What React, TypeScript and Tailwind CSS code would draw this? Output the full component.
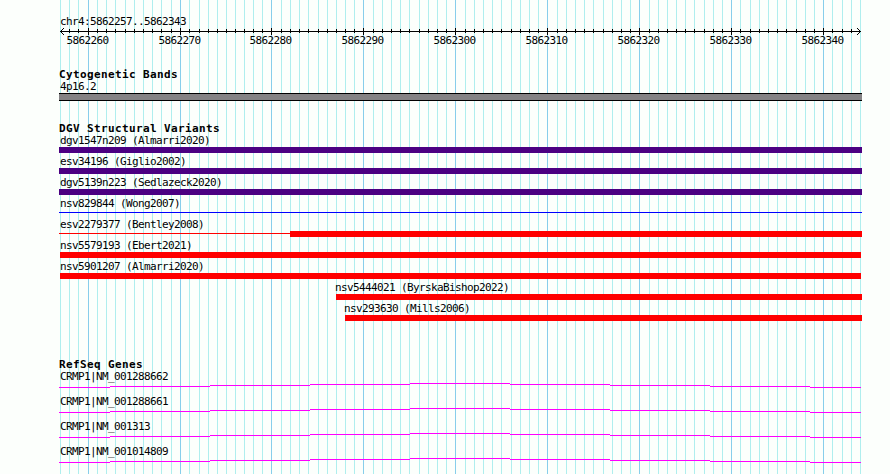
import clsx from 'clsx';

/**
 * Genome browser view
 *
 * Ruler on top, then one block per track. The base-pair grid is drawn once
 * behind all tracks.
 */

interface Variant {
  label: string;
  labelClass?: string;
  barClass: string;
  thinClass?: string;
}

// x position of every base in the visible range
const gridLines = [
  60, 69, 78, 88, 97, 106, 115, 125, 134, 143, 152, 161, 171, 180, 189, 199,
  208, 217, 226, 235, 244, 253, 262, 271, 281, 290, 299, 308, 318, 327, 336,
  345, 354, 363, 373, 382, 391, 400, 409, 419, 428, 437, 446, 455, 465, 474,
  483, 492, 501, 511, 520, 529, 538, 547, 557, 566, 575, 584, 593, 603, 612,
  621, 630, 639, 649, 658, 667, 676, 685, 694, 704, 713, 722, 731, 740, 750,
  759, 768, 777, 786, 796, 805, 814, 823, 832, 842, 851, 860,
];

const isMajor = (index: number) => index % 10 === 3;

const variants: Variant[] = [
  { label: 'dgv1547n209 (Almarri2020)', barClass: 'ml-[59px] w-[803px] bg-[#4b0082]' },
  { label: 'esv34196 (Giglio2002)', barClass: 'ml-[59px] w-[803px] bg-[#4b0082]' },
  { label: 'dgv5139n223 (Sedlazeck2020)', barClass: 'ml-[59px] w-[803px] bg-[#4b0082]' },
  { label: 'nsv829844 (Wong2007)', barClass: 'hidden', thinClass: 'ml-[59px] w-[803px] bg-[#0000ff]' },
  {
    label: 'esv2279377 (Bentley2008)',
    barClass: 'w-[572px] bg-[#ff0000]',
    thinClass: 'ml-[59px] w-[231px] bg-[#ff0000]',
  },
  { label: 'nsv5579193 (Ebert2021)', barClass: 'ml-[60px] w-[801px] bg-[#ff0000]' },
  { label: 'nsv5901207 (Almarri2020)', barClass: 'ml-[60px] w-[801px] bg-[#ff0000]' },
  {
    label: 'nsv5444021 (ByrskaBishop2022)',
    labelClass: 'pl-[335px]',
    barClass: 'ml-[336px] w-[526px] bg-[#ff0000]',
  },
  {
    label: 'nsv293630 (Mills2006)',
    labelClass: 'pl-[344px]',
    barClass: 'ml-[345px] w-[517px] bg-[#ff0000]',
  },
];

const genes = [
  'CRMP1|NM_001288662',
  'CRMP1|NM_001288661',
  'CRMP1|NM_001313',
  'CRMP1|NM_001014809',
];

// Intron line, one pixel step per segment: [x, y, width]
const intronSteps = [
  [59, 4, 51],
  [110, 3, 100],
  [210, 2, 100],
  [310, 1, 100],
  [410, 0, 100],
  [510, 1, 100],
  [610, 2, 100],
  [710, 3, 100],
  [810, 4, 51],
];

function Grid() {
  return (
    <svg className="absolute inset-0" width="890" height="474" shapeRendering="crispEdges">
      {gridLines.map((x, i) => (
        <rect key={x} x={x} y="0" width="1" height="474" fill={isMajor(i) ? '#87ceeb' : '#afeeee'} />
      ))}
    </svg>
  );
}

function Ruler() {
  return (
    <svg className="block" width="890" height="20">
      <g shapeRendering="crispEdges">
        <rect x="60" y="4" width="801" height="1" />
        {gridLines.slice(1, -1).map((x, i) =>
          isMajor(i + 1) ? (
            <rect key={x} x={x} y="1" width="1" height="7" />
          ) : (
            <rect key={x} x={x} y="2" width="1" height="4" />
          )
        )}
        {[1, 2, 3].map((d) => (
          <g key={d}>
            <rect x={60 + d} y={4 - d} width="1" height="1" />
            <rect x={60 + d} y={4 + d} width="1" height="1" />
            <rect x={860 - d} y={4 - d} width="1" height="1" />
            <rect x={860 - d} y={4 + d} width="1" height="1" />
          </g>
        ))}
      </g>
      {gridLines.map((x, i) =>
        isMajor(i) ? (
          <text key={x} x={x - 21.5} y="17">
            {5862257 + i}
          </text>
        ) : null
      )}
    </svg>
  );
}

function TrackTitle({ children }: { children: string }) {
  return (
    <h2 className="h-3 pl-[59px] font-bold tracking-[0.38px]">{children}</h2>
  );
}

function VariantRow({ label, labelClass, barClass, thinClass }: Variant) {
  return (
    <div className="h-[21px]">
      <div className={clsx('h-[13px]', labelClass ?? 'pl-[60px]')}>{label}</div>
      <div className="flex h-1.5">
        {thinClass && <div className={clsx('mt-0.5 h-px shrink-0', thinClass)} />}
        <div className={clsx('h-1.5 shrink-0', barClass)} />
      </div>
    </div>
  );
}

function GeneRow({ label }: { label: string }) {
  return (
    <div className="h-[25px]">
      <div className="h-[13px] pl-[60px]">{label}</div>
      <svg className="block" width="890" height="5" fill="#ff00ff" shapeRendering="crispEdges">
        {intronSteps.map(([x, y, width]) => (
          <rect key={x} x={x} y={y} width={width} height="1" />
        ))}
      </svg>
    </div>
  );
}

export default function App() {
  return (
    <div className="relative h-[474px] w-[890px] overflow-hidden bg-[#fcfffc] font-['DejaVu_Sans_Mono',monospace] text-[11px] leading-[14px] tracking-[-0.622px] whitespace-pre text-black">
      <Grid />
      <main className="relative pt-[15px]">
        <header className="h-[53px]">
          <div className="h-3 pl-[60px]">chr4:5862257..5862343</div>
          <Ruler />
        </header>

        <section className="h-[54px]">
          <TrackTitle>Cytogenetic Bands</TrackTitle>
          <div className="h-[13px] pl-[60px]">4p16.2</div>
          <div className="ml-[59px] h-2 w-[803px] border-y border-black bg-[#848284]" />
        </section>

        <section className="h-[236px]">
          <TrackTitle>DGV Structural Variants</TrackTitle>
          {variants.map((variant) => (
            <VariantRow key={variant.label} {...variant} />
          ))}
        </section>

        <section>
          <TrackTitle>RefSeq Genes</TrackTitle>
          {genes.map((gene) => (
            <GeneRow key={gene} label={gene} />
          ))}
        </section>
      </main>
    </div>
  );
}
